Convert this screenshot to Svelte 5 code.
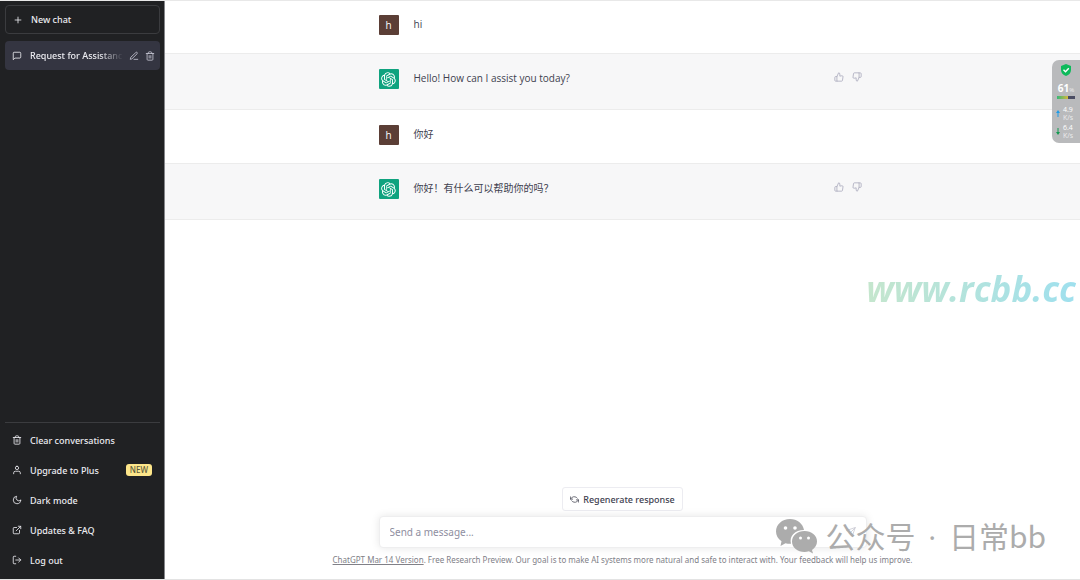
<script>
  let draft = $state('');

  const messages = [
    { from: 'user', text: 'hi' },
    { from: 'bot', text: 'Hello! How can I assist you today?' },
    { from: 'user', text: '你好' },
    { from: 'bot', text: '你好！有什么可以帮助你的吗？' }
  ];

  const menu = [
    { icon: 'trash', label: 'Clear conversations' },
    { icon: 'user', label: 'Upgrade to Plus', badge: 'NEW' },
    { icon: 'moon', label: 'Dark mode' },
    { icon: 'external', label: 'Updates & FAQ' },
    { icon: 'logout', label: 'Log out' }
  ];

  const icons = {
    plus: 'M12 5v14M5 12h14',
    chat: 'M21 15a2 2 0 0 1-2 2H7l-4 4V5a2 2 0 0 1 2-2h14a2 2 0 0 1 2 2z',
    edit: 'M12 20h9M16.5 3.5a2.12 2.12 0 0 1 3 3L7 19l-4 1 1-4z',
    trash: 'M3 6h18M19 6v14a2 2 0 0 1-2 2H7a2 2 0 0 1-2-2V6m3 0V4a2 2 0 0 1 2-2h4a2 2 0 0 1 2 2v2M10 11v6M14 11v6',
    user: 'M20 21v-2a4 4 0 0 0-4-4H8a4 4 0 0 0-4 4v2M12 3a4 4 0 1 0 0 8 4 4 0 0 0 0-8z',
    moon: 'M21 12.79A9 9 0 1 1 11.21 3 7 7 0 0 0 21 12.79z',
    external: 'M18 13v6a2 2 0 0 1-2 2H5a2 2 0 0 1-2-2V8a2 2 0 0 1 2-2h6M15 3h6v6M10 14 21 3',
    logout: 'M9 21H5a2 2 0 0 1-2-2V5a2 2 0 0 1 2-2h4M16 17l5-5-5-5M21 12H9',
    up: 'M14 9V5a3 3 0 0 0-3-3l-4 9v11h11.28a2 2 0 0 0 2-1.7l1.38-9a2 2 0 0 0-2-2.3zM7 22H4a2 2 0 0 1-2-2v-7a2 2 0 0 1 2-2h3',
    down: 'M10 15v4a3 3 0 0 0 3 3l4-9V2H5.72a2 2 0 0 0-2 1.7l-1.38 9a2 2 0 0 0 2 2.3zM17 2h2.67A2.31 2.31 0 0 1 22 4v7a2.31 2.31 0 0 1-2.33 2H17',
    refresh: 'M1 5v6h6M23 19v-6h-6M19.500 8.500A9 8 0 0 0 5.600 6.500L1 11m22 2-4.600 4.500A9 8 0 0 1 4.500 15.500',
    send: 'M22 2 11 13M22 2l-7 20-4-9-9-4z'
  };
</script>

{#snippet icon(name)}
  <svg class="icon" viewBox="0 0 24 24" aria-hidden="true"><path d={icons[name]} /></svg>
{/snippet}

<div class="app">
  <aside>
    <button class="item new">{@render icon('plus')}<span>New chat</span></button>
    <div class="item current">
      {@render icon('chat')}
      <a href="#chat">Request for Assistanc</a>
      <button class="tool" aria-label="Rename">{@render icon('edit')}</button>
      <button class="tool" aria-label="Delete">{@render icon('trash')}</button>
    </div>
    <nav>
      {#each menu as entry}
        <button class="item">
          {@render icon(entry.icon)}
          <span>{entry.label}</span>
          {#if entry.badge}<em>{entry.badge}</em>{/if}
        </button>
      {/each}
    </nav>
  </aside>

  <main>
    <section class="thread">
      {#each messages as message}
        <article class={message.from}>
          <div class="row">
            <div class="avatar">
              {#if message.from === 'bot'}
                <svg viewBox="0 0 41 41" aria-hidden="true">
                  <path d="M37.532 16.87a9.963 9.963 0 0 0-.856-8.184 10.078 10.078 0 0 0-10.855-4.835A9.964 9.964 0 0 0 18.306.5a10.079 10.079 0 0 0-9.614 6.977 9.967 9.967 0 0 0-6.664 4.834 10.08 10.08 0 0 0 1.24 11.817 9.965 9.965 0 0 0 .856 8.185 10.079 10.079 0 0 0 10.855 4.835 9.965 9.965 0 0 0 7.516 3.35 10.078 10.078 0 0 0 9.617-6.981 9.967 9.967 0 0 0 6.663-4.834 10.079 10.079 0 0 0-1.243-11.813ZM22.498 37.886a7.474 7.474 0 0 1-4.799-1.735c.061-.033.168-.091.237-.134l7.964-4.6a1.294 1.294 0 0 0 .655-1.134V19.054l3.366 1.944a.12.12 0 0 1 .066.092v9.299a7.505 7.505 0 0 1-7.49 7.496ZM6.392 31.006a7.471 7.471 0 0 1-.894-5.023c.06.036.162.099.237.141l7.964 4.6a1.297 1.297 0 0 0 1.308 0l9.724-5.614v3.888a.12.12 0 0 1-.048.103l-8.051 4.649a7.504 7.504 0 0 1-10.24-2.744ZM4.297 13.62A7.469 7.469 0 0 1 8.2 10.333c0 .068-.004.19-.004.274v9.201a1.294 1.294 0 0 0 .654 1.132l9.723 5.614-3.366 1.944a.12.12 0 0 1-.114.01L7.04 23.856a7.504 7.504 0 0 1-2.743-10.237Zm27.658 6.437-9.724-5.615 3.367-1.943a.121.121 0 0 1 .113-.01l8.052 4.648a7.498 7.498 0 0 1-1.158 13.528v-9.476a1.293 1.293 0 0 0-.65-1.132Zm3.35-5.043c-.059-.037-.162-.099-.236-.141l-7.965-4.6a1.298 1.298 0 0 0-1.308 0l-9.723 5.614v-3.888a.12.12 0 0 1 .048-.103l8.05-4.645a7.497 7.497 0 0 1 11.135 7.763Zm-21.063 6.929-3.367-1.944a.12.12 0 0 1-.065-.092v-9.299a7.497 7.497 0 0 1 12.293-5.756 6.94 6.94 0 0 0-.236.134l-7.965 4.6a1.294 1.294 0 0 0-.654 1.132l-.006 11.225Zm1.829-3.943 4.33-2.501 4.332 2.5v5l-4.331 2.5-4.331-2.5V18Z" />
                </svg>
              {:else}
                h
              {/if}
            </div>
            <p>{message.text}</p>
            {#if message.from === 'bot'}
              <div class="votes">
                <button aria-label="Good response">{@render icon('up')}</button>
                <button aria-label="Bad response">{@render icon('down')}</button>
              </div>
            {/if}
          </div>
        </article>
      {/each}
    </section>

    <footer>
      <button class="regenerate">{@render icon('refresh')}Regenerate response</button>
      <form onsubmit={(e) => e.preventDefault()}>
        <input aria-label="Message" placeholder="Send a message..." bind:value={draft} />
        <button aria-label="Send">{@render icon('send')}</button>
      </form>
      <p><a href="#notes">ChatGPT Mar 14 Version</a>. Free Research Preview. Our goal is to make AI systems more natural and safe to interact with. Your feedback will help us improve.</p>
    </footer>
  </main>

  <!-- floating system monitor -->
  <div class="monitor">
    <svg class="shield" viewBox="0 0 12 12" aria-hidden="true">
      <path d="M6 0 11 2v4c0 3-2 5-5 6-3-1-5-3-5-6V2z" fill="#0dba5b" />
      <path d="m3.5 5.8 2 2 3.3-3.6" fill="none" stroke="#fff" stroke-width="1.4" />
    </svg>
    <div class="load"><b>61</b><small>%</small></div>
    <div class="meter"></div>
    <div class="rate">
      <svg viewBox="0 0 4 8" aria-hidden="true"><path d="M2 0 4 3H2.5v4h-1V3H0z" fill="#1e9be8" /></svg>
      <span><b>4.9</b><small>K/s</small></span>
    </div>
    <div class="rate">
      <svg viewBox="0 0 4 8" aria-hidden="true"><path d="M2 7 4 4H2.5V0h-1v4H0z" fill="#139a50" /></svg>
      <span><b>6.4</b><small>K/s</small></span>
    </div>
  </div>

  <div class="site">www.rcbb.cc</div>

  <div class="account">
    <svg viewBox="0 0 41 35" aria-hidden="true">
      <path d="M14 0C6 0 0 5.5 0 12.500c0 4 2 7.300 5.500 9.700L4.500 27l5-2.800c1.800.5 3.600.8 5.500.6C13 17 19 11 28 11 27 4.500 21 0 14 0z" />
      <path d="M28.500 12C21.500 12 16 16.600 16 22.500S21.500 33 28.500 33c1.500 0 3-.3 4.400-.7L37 34.500 36 31c3-2 5-5 5-8.500C41 16.600 35.500 12 28.500 12z" />
      <g fill="#fff"><circle cx="9.500" cy="9" r="1.800" /><circle cx="19" cy="9" r="1.800" /><circle cx="24.500" cy="19" r="1.500" /><circle cx="32.500" cy="19" r="1.500" /></g>
    </svg>
    <span>公众号 <i>·</i> 日常bb</span>
  </div>
</div>

<style>
  :global(body) {
    margin: 0;
    background: #fff;
  }

  .app {
    position: relative;
    display: flex;
    box-sizing: border-box;
    min-height: 100vh;
    border-bottom: 1px solid #e3e3e3;
    font-family: 'Open Sans', 'Noto Sans CJK SC', sans-serif;
    font-size: 10px;
    color: #40414f;
  }

  .app::before {
    content: '';
    position: absolute;
    top: 0;
    left: 0;
    right: 0;
    height: 1px;
    background: #e8e8e8;
  }

  button,
  input {
    font: inherit;
    color: inherit;
    border: 0;
    padding: 0;
    background: none;
  }

  button {
    cursor: pointer;
  }

  .icon {
    display: block;
    flex: none;
    width: 10px;
    height: 10px;
    fill: none;
    stroke: currentColor;
    stroke-width: 2;
    stroke-linecap: round;
    stroke-linejoin: round;
  }

  aside {
    display: flex;
    flex-direction: column;
    flex: none;
    box-sizing: border-box;
    width: 165px;
    padding: 5px 4px 4px 5px;
    border-right: 1px solid #85868a;
    background: #202123;
    color: #ececf1;
    font-family: 'Noto Sans', sans-serif;
    font-size: 9px;
    font-weight: 500;
  }

  .item {
    display: flex;
    align-items: center;
    gap: 8px;
    box-sizing: border-box;
    width: 100%;
    height: 30px;
    padding: 0 8px 0 7px;
    border-radius: 4px;
    text-align: left;
  }

  .new,
  .current {
    height: 29px;
  }

  .new {
    border: 1px solid #3b3c3f;
    margin-bottom: 7px;
  }

  .current {
    gap: 6px;
    background: #343541;
    padding-right: 5px;
  }

  .current a {
    flex: 1;
    margin-left: 2px;
    white-space: nowrap;
    color: inherit;
    text-decoration: none;
    mask-image: linear-gradient(to right, #000 75%, transparent);
  }

  .tool {
    color: #c5c5d2;
  }

  nav {
    margin-top: auto;
    border-top: 1px solid #3b3c3f;
    padding-top: 2px;
  }

  nav em {
    margin-left: auto;
    padding: 0 4px;
    border-radius: 3px;
    background: #fde68a;
    color: #5c5a3c;
    font-size: 8px;
    font-style: normal;
    line-height: 12px;
  }

  main {
    display: flex;
    flex: 1;
    flex-direction: column;
    min-width: 0;
  }

  article {
    padding: 15px 24px 18px;
    border-bottom: 1px solid #ececec;
  }

  .bot {
    padding-bottom: 20px;
    background: #f7f7f8;
  }

  .row {
    display: flex;
    max-width: 488px;
    margin: 0 auto;
  }

  .avatar {
    display: flex;
    align-items: center;
    justify-content: center;
    flex: none;
    width: 20px;
    height: 20px;
    border-radius: 1px;
    background: #5b3e36;
    color: #fff;
  }

  .bot .avatar {
    background: #10a37f;
  }

  .avatar svg {
    width: 15px;
    height: 15px;
    fill: #fff;
  }

  .row p {
    flex: 1;
    margin: 0 0 0 15px;
    line-height: 18px;
  }

  .votes {
    display: flex;
    gap: 8px;
    margin: 3px 5px 0 0;
    align-items: flex-start;
    color: #acacbe;
  }

  footer {
    display: flex;
    flex-direction: column;
    align-items: center;
    margin-top: auto;
    padding: 0 24px 13px;
    font-family: 'Noto Sans', sans-serif;
  }

  .regenerate {
    display: flex;
    align-items: center;
    gap: 4px;
    height: 24px;
    padding: 0 7px;
    border: 1px solid #ececf1;
    border-radius: 3px;
    background: #fff;
    font-size: 9px;
    font-weight: 500;
  }

  .regenerate .icon {
    width: 9px;
    height: 9px;
  }

  form {
    display: flex;
    align-items: center;
    box-sizing: border-box;
    width: 100%;
    max-width: 488px;
    height: 32px;
    margin: 5px 0 6px;
    padding: 0 10px;
    border: 1px solid #eeeeef;
    border-radius: 4px;
    background: #fff;
    box-shadow: 0 0 8px rgba(0, 0, 0, 0.1);
    color: #c9c9d2;
  }

  input {
    flex: 1;
    min-width: 0;
    outline: none;
    color: #343541;
  }

  input::placeholder {
    color: #8e8ea0;
    opacity: 1;
  }

  footer p {
    margin: 0;
    color: #808087;
    font-size: 8px;
    line-height: 12px;
  }

  footer a {
    color: inherit;
  }

  .monitor {
    position: absolute;
    top: 60px;
    right: 0;
    display: flex;
    flex-direction: column;
    align-items: center;
    box-sizing: border-box;
    width: 28px;
    height: 83px;
    padding-top: 4px;
    border-radius: 7px 0 0 7px;
    background: #b9babc;
    color: #fff;
    line-height: 9px;
  }

  .shield {
    width: 12px;
    height: 12px;
  }

  .load {
    margin-top: 8px;
  }

  .monitor small {
    font-size: 6px;
    color: #ececec;
  }

  .meter {
    width: 18px;
    height: 3px;
    margin: 1px 0 6px;
    background: linear-gradient(to right, #35b878, #d2b83d 60%, #4b4d63 60%);
  }

  .rate {
    display: flex;
    align-items: center;
    gap: 3px;
    height: 18px;
    margin-right: 3px;
  }

  .rate svg {
    width: 4px;
    height: 8px;
  }

  .rate b,
  .rate small {
    display: block;
    font-size: 7px;
    font-weight: 500;
    line-height: 8px;
  }

  .site {
    position: absolute;
    top: 264px;
    right: 4px;
    background: linear-gradient(to right, #c5e6cd, #9fe0ee);
    background-clip: text;
    color: transparent;
    font: italic 700 35px/50px 'Comic Sans MS', 'Open Sans', sans-serif;
  }

  .account {
    position: absolute;
    right: 34px;
    bottom: 20px;
    display: flex;
    align-items: center;
    gap: 9px;
    color: #acacac;
    font: 30px/44px 'Noto Sans CJK SC', sans-serif;
    white-space: nowrap;
  }

  .account i {
    margin: 0 6px;
    font-family: 'Open Sans', sans-serif;
    font-style: normal;
  }

  .account svg {
    width: 41px;
    height: 35px;
    fill: #acacac;
  }
</style>
